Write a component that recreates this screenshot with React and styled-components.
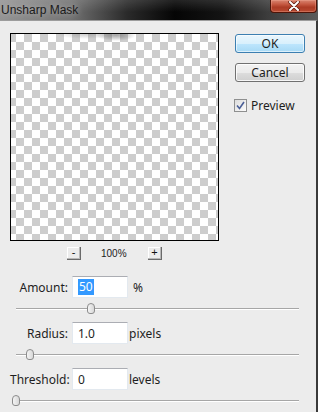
import styled, { createGlobalStyle } from 'styled-components'

const Global = createGlobalStyle`
    html, body {
        margin: 0;
        padding: 0;
        background: #ececec;
    }
    body {
        font-family: "Noto Sans", "Liberation Sans", sans-serif;
        font-size: 12px;
        color: #1e1e1e;
    }
`

const Window = styled.div`
    width: 318px;
    height: 412px;
    overflow: hidden;
    display: flex;
    flex-direction: column;
`

const TitleBar = styled.div`
    height: 20px;
    flex: none;
    display: flex;
    align-items: flex-start;
    justify-content: space-between;
    background:
        linear-gradient(to bottom, rgba(255,255,255,0.12), rgba(0,0,0,0) 60%),
        linear-gradient(to right, #949494 0%, #737373 22%, #2a2a2a 40%, #050505 55%, #141414 70%, #3c3c3c 84%, #5b5b5b 100%);
`

const Title = styled.div`
    font-family: "Liberation Sans", sans-serif;
    font-size: 12px;
    line-height: 20px;
    padding-left: 1px;
    color: #1a1a1a;
    text-shadow: 0 0 6px rgba(255,255,255,0.5);
`

const CloseButton = styled.div`
    width: 47px;
    height: 13px;
    margin-right: 1px;
    box-sizing: border-box;
    border: 1px solid #4d1408;
    border-top: none;
    border-radius: 0 0 4px 4px;
    background: linear-gradient(to bottom, #d88571 0%, #c65a43 35%, #ac3b25 60%, #b84a31 100%);
    box-shadow: inset 0 0 0 1px rgba(255,190,170,0.3);
    display: flex;
    align-items: center;
    justify-content: center;
`

const Body = styled.div`
    flex: 1;
    border-top: 1px solid #9c9c9c;
    border-right: 2px solid #3a3a3a;
    background: #ececec;
    padding: 12px 0 0 10px;
    display: flex;
    flex-direction: column;
`

const TopRow = styled.div`
    display: flex;
    gap: 16px;
`

const PreviewColumn = styled.div`
    display: flex;
    flex-direction: column;
`

const PreviewBox = styled.div`
    position: relative;
    width: 209px;
    height: 208px;
    box-sizing: border-box;
    border: 1px solid #000;
    background-image: conic-gradient(#fff 0 25%, #cdcdcd 0 50%, #fff 0 75%, #cdcdcd 0);
    background-size: 16px 16px;
    background-position: -3px 0;

    &::before {
        content: "";
        position: absolute;
        left: 45px;
        top: 0;
        width: 90px;
        height: 12px;
        background:
            radial-gradient(ellipse 20px 6px at 60px 1px, rgba(70,70,70,0.5), rgba(70,70,70,0) 100%),
            radial-gradient(ellipse 30px 5px at 30px 0px, rgba(110,110,110,0.35), rgba(110,110,110,0) 100%);
    }
`

const ZoomRow = styled.div`
    display: flex;
    align-items: center;
    margin-top: 6px;
    padding-left: 57px;
    height: 13px;
`

const ZoomButton = styled.div`
    width: 14px;
    height: 13px;
    box-sizing: border-box;
    border-right: 1px solid #6a6a6a;
    border-bottom: 1px solid #6a6a6a;
    box-shadow: inset -1px -1px 0 #b8b8b8, inset 1px 1px 0 #fff;
    background: #ececec;
    font-family: "Liberation Sans", sans-serif;
    font-size: 11px;
    line-height: 10px;
    text-align: center;
    color: #111;
`

const ZoomLabel = styled.div`
    font-family: "Liberation Sans", sans-serif;
    font-size: 10px;
    width: 67px;
    padding-left: 20px;
    box-sizing: border-box;
    color: #222;
`

const SideColumn = styled.div`
    display: flex;
    flex-direction: column;
    padding-top: 1px;
`

const Button = styled.div`
    width: 70px;
    height: 19px;
    box-sizing: border-box;
    margin-bottom: ${p => p.$gap || 0}px;
    border: 1px solid ${p => (p.$focused ? '#3c7fb1' : '#707070')};
    border-radius: 3px;
    background: ${p => (p.$focused
        ? 'linear-gradient(to bottom, #eaf6fd 0%, #d9f0fc 50%, #bee6fd 51%, #a7d9f5 100%)'
        : 'linear-gradient(to bottom, #f2f2f2 0%, #ebebeb 50%, #dddddd 51%, #cfcfcf 100%)')};
    box-shadow: inset 0 0 0 1px ${p => (p.$focused ? 'rgba(255,255,255,0.6)' : 'rgba(255,255,255,0.8)')};
    display: flex;
    align-items: center;
    justify-content: center;
    font-size: 12px;
    color: #1e1e1e;
`

const CheckRow = styled.label`
    display: flex;
    align-items: center;
    gap: 4px;
    margin-left: -1px;
`

const CheckBox = styled.span`
    width: 13px;
    height: 13px;
    box-sizing: border-box;
    border: 1px solid #8e8f8f;
    background: linear-gradient(135deg, #dcdcdc, #fcfcfc);
    display: flex;
    align-items: center;
    justify-content: center;
`

const Params = styled.div`
    margin-top: 16px;
    display: flex;
    flex-direction: column;
`

const ParamRow = styled.div`
    display: flex;
    align-items: center;
    height: 22px;
    margin-top: ${p => p.$top || 0}px;
`

const Label = styled.div`
    width: 58px;
    margin-right: 4px;
    text-align: right;
`

const Input = styled.div`
    width: 56px;
    height: 22px;
    box-sizing: border-box;
    border: 1px solid #e3e9ef;
    border-top-color: #abadb3;
    background: #fff;
    padding-left: 5px;
    display: flex;
    align-items: center;
`

const Selected = styled.span`
    background: #3399ff;
    color: #fff;
    padding: 0 1px;
    line-height: 16px;
`

const Unit = styled.div`
    margin-left: ${p => p.$gap}px;
`

const Slider = styled.div`
    position: relative;
    width: 283px;
    height: 12px;
    margin: 5px 0 0 6px;
    display: flex;
    align-items: center;
`

const Track = styled.div`
    width: 100%;
    height: 1px;
    background: #a6a6a6;
    border-bottom: 1px solid #fff;
`

const Thumb = styled.div`
    position: absolute;
    top: 0;
    width: 8px;
    height: 11px;
    box-sizing: border-box;
    border: 1px solid #8c8c8c;
    border-radius: 4px 4px 3px 3px;
    background: linear-gradient(to right, #f4f4f4, #d8d8d8);
`

function Param({ label, value, unit, unitGap, thumb, top, selected }) {
    return (
        <>
            <ParamRow $top={top}>
                <Label>{label}</Label>
                <Input>{selected ? <Selected>{value}</Selected> : value}</Input>
                <Unit $gap={unitGap}>{unit}</Unit>
            </ParamRow>
            <Slider>
                <Track />
                <Thumb style={{ left: thumb }} />
            </Slider>
        </>
    )
}

function App() {
    return (
        <Window>
            <Global />
            <TitleBar>
                <Title>Unsharp Mask</Title>
                <CloseButton>
                    <svg width="12" height="10" viewBox="0 0 12 10">
                        <path d="M2 1 L10 9 M10 1 L2 9" stroke="#5a1a10" strokeWidth="3.4" strokeLinecap="round" />
                        <path d="M2 1 L10 9 M10 1 L2 9" stroke="#fff" strokeWidth="2" strokeLinecap="round" />
                    </svg>
                </CloseButton>
            </TitleBar>
            <Body>
                <TopRow>
                    <PreviewColumn>
                        <PreviewBox />
                        <ZoomRow>
                            <ZoomButton>-</ZoomButton>
                            <ZoomLabel>100%</ZoomLabel>
                            <ZoomButton>+</ZoomButton>
                        </ZoomRow>
                    </PreviewColumn>
                    <SideColumn>
                        <Button $focused $gap={10}>OK</Button>
                        <Button $gap={15}>Cancel</Button>
                        <CheckRow>
                            <CheckBox>
                                <svg width="9" height="9" viewBox="0 0 9 9">
                                    <path d="M1 4.5 L3.5 7.5 L8 1" fill="none" stroke="#4a5f97" strokeWidth="1.6" />
                                </svg>
                            </CheckBox>
                            Preview
                        </CheckRow>
                    </SideColumn>
                </TopRow>
                <Params>
                    <Param label="Amount:" value="50" unit="%" unitGap={5} thumb={71} selected />
                    <Param label="Radius:" value="1.0" unit="pixels" unitGap={1} thumb={10} top={7} />
                    <Param label="Threshold:" value="0" unit="levels" unitGap={1} thumb={-4} top={7} />
                </Params>
            </Body>
        </Window>
    )
}

export default App
